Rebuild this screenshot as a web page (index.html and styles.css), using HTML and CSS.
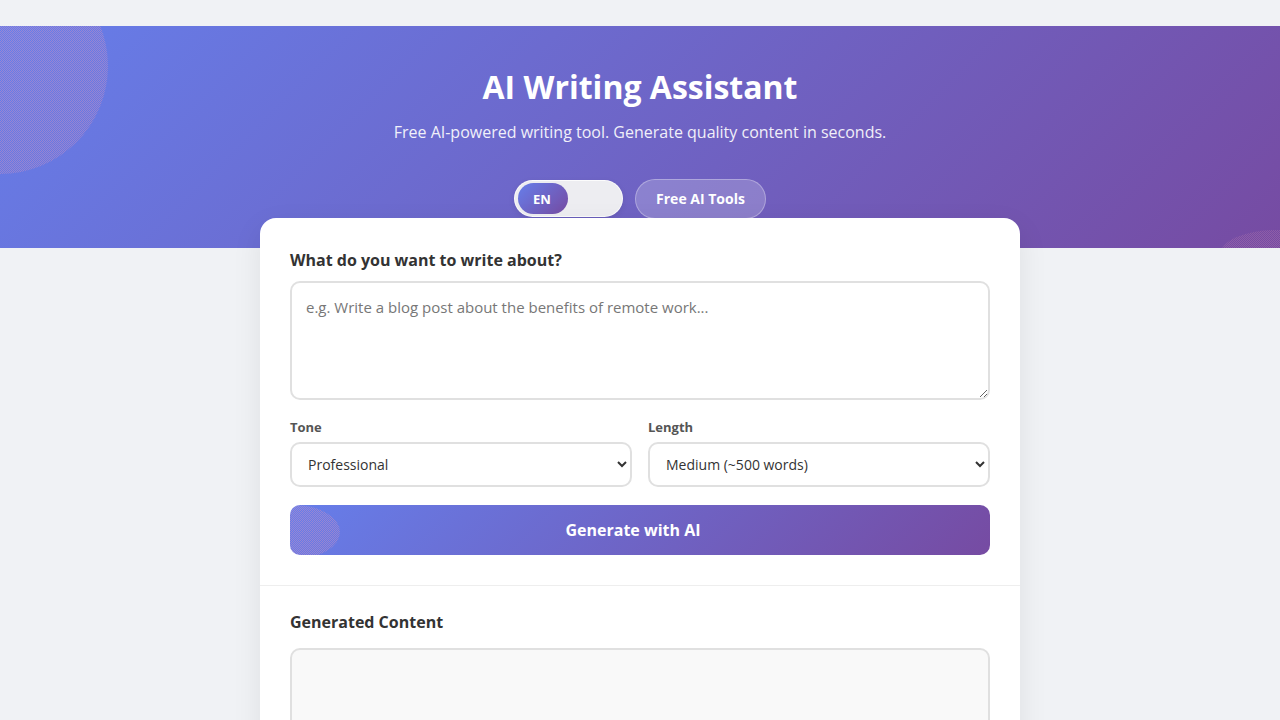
FILE: index.html
```html
<!DOCTYPE html>
<html lang="en">
	<head>
		<meta charset="utf-8">
		<title>AI Writing Assistant</title>
		<link rel="stylesheet" href="styles.css">
	</head>
	<body>
		<header class="hero">
			<h1 class="hero-title">AI Writing Assistant</h1>
			<p class="hero-sub">Free AI-powered writing tool. Generate quality content in seconds.</p>
			<div class="hero-controls">
				<div class="lang-toggle">
					<span class="lang-knob">EN</span>
				</div>
				<a class="tools-link" href="#">Free AI Tools</a>
			</div>
		</header>

		<main class="card">
			<section class="card-section">
				<label class="field-label" for="topic">What do you want to write about?</label>
				<textarea class="topic" id="topic" placeholder="e.g. Write a blog post about the benefits of remote work..."></textarea>

				<div class="options">
					<div class="option">
						<label class="option-label" for="tone">Tone</label>
						<select class="option-select" id="tone">
							<option>Professional</option>
							<option>Casual</option>
							<option>Friendly</option>
						</select>
					</div>
					<div class="option">
						<label class="option-label" for="length">Length</label>
						<select class="option-select" id="length">
							<option>Short (~200 words)</option>
							<option selected>Medium (~500 words)</option>
							<option>Long (~1000 words)</option>
						</select>
					</div>
				</div>

				<button class="generate" id="generate">Generate with AI</button>
			</section>

			<section class="card-section result">
				<h3 class="result-title">Generated Content</h3>
				<div class="output" id="output"></div>
			</section>
		</main>
	</body>
</html>
```

FILE: styles.css
```css
body {
	margin: 0;
	padding: 26px 0 40px;
	background: #f0f2f5;
	font-family: "Open Sans", "Noto Sans", sans-serif;
	color: #333;
}
.hero {
	position: relative;
	overflow: hidden;
	padding: 40px 20px 29px;
	background: linear-gradient(135deg, #667eea 0%, #764ba2 100%);
	color: white;
	text-align: center;
}
/* dotted blobs in the corners */
.hero::before,
.hero::after {
	content: "";
	position: absolute;
	border-radius: 50%;
	background-image: repeating-conic-gradient(rgba(225, 150, 185, 0.4) 0 25%, transparent 0 50%);
	background-size: 2px 2px;
}
.hero::before {
	width: 216px;
	height: 216px;
	left: -108px;
	top: -68px;
}
.hero::after {
	width: 110px;
	height: 50px;
	right: -50px;
	bottom: -32px;
	opacity: 0.6;
}
.hero-title {
	margin: 0 0 12px;
	font-size: 32px;
	line-height: 1.3;
	font-weight: 700;
}
.hero-sub {
	margin: 0 0 35px;
	font-size: 16px;
	line-height: 1.5;
	opacity: 0.9;
}
.hero-controls {
	display: flex;
	justify-content: center;
	align-items: center;
	gap: 12px;
	height: 40px;
}
.lang-toggle {
	width: 109px;
	height: 37px;
	box-sizing: border-box;
	padding: 3px 4px 3px 3px;
	border-radius: 20px;
	background: #ededf1;
	border: 1px solid rgba(255, 255, 255, 0.8);
	box-shadow: 0 2px 6px rgba(0, 0, 0, 0.08);
	display: flex;
	align-items: center;
}
.lang-knob {
	width: 50px;
	height: 31px;
	border-radius: 16px;
	background: linear-gradient(135deg, #667eea 0%, #764ba2 100%);
	color: white;
	font-size: 13px;
	font-weight: 700;
	display: flex;
	align-items: center;
	justify-content: center;
	padding-right: 2px;
	box-sizing: border-box;
}
.tools-link {
	width: 131px;
	height: 40px;
	box-sizing: border-box;
	border-radius: 20px;
	background: rgba(255, 255, 255, 0.2);
	border: 1px solid rgba(255, 255, 255, 0.3);
	color: white;
	font-size: 14px;
	font-weight: 700;
	text-decoration: none;
	display: flex;
	align-items: center;
	justify-content: center;
}
.card {
	position: relative;
	width: 760px;
	margin: -30px auto 0;
	background: white;
	border-radius: 16px;
	box-shadow: 0 10px 30px rgba(0, 0, 0, 0.08);
}
.card-section {
	padding: 30px;
}
.result {
	padding-top: 24px;
	border-top: 1px solid #eee;
}
.field-label {
	display: block;
	margin-bottom: 9px;
	font-size: 16px;
	line-height: 24px;
	font-weight: 700;
	color: #333;
}
.topic {
	display: block;
	width: 100%;
	height: 119px;
	box-sizing: border-box;
	padding: 13px 14px;
	border: 2px solid #e0e0e0;
	border-radius: 10px;
	font-family: inherit;
	font-size: 15px;
	line-height: 1.5;
	color: #333;
	resize: vertical;
}
.topic::placeholder {
	color: #777;
}
.options {
	display: grid;
	grid-template-columns: 1fr 1fr;
	gap: 16px;
	margin-top: 18px;
}
.option-label {
	display: block;
	margin-bottom: 6px;
	font-size: 13px;
	line-height: 18px;
	font-weight: 700;
	color: #555;
}
.option-select {
	display: block;
	width: 100%;
	height: 45px;
	box-sizing: border-box;
	padding: 0 12px;
	border: 2px solid #e0e0e0;
	border-radius: 10px;
	background: white;
	font-family: inherit;
	font-size: 14px;
	color: #333;
}
.generate {
	position: relative;
	overflow: hidden;
	display: block;
	width: 100%;
	height: 50px;
	margin-top: 18px;
	padding: 0 14px 0 0;
	border: none;
	border-radius: 10px;
	background: linear-gradient(135deg, #667eea 0%, #764ba2 100%);
	color: white;
	font-family: inherit;
	font-size: 16px;
	font-weight: 700;
	cursor: pointer;
}
.generate::before {
	content: "";
	position: absolute;
	left: -42px;
	top: 0;
	width: 92px;
	height: 54px;
	border-radius: 50%;
	background-image: repeating-conic-gradient(rgba(225, 150, 185, 0.4) 0 25%, transparent 0 50%);
	background-size: 2px 2px;
}
.result-title {
	margin: 0 0 14px;
	font-size: 16px;
	line-height: 24px;
	font-weight: 700;
	color: #333;
}
.output {
	min-height: 200px;
	border: 2px solid #e0e0e0;
	border-radius: 10px;
	background: #f9f9f9;
}
```
